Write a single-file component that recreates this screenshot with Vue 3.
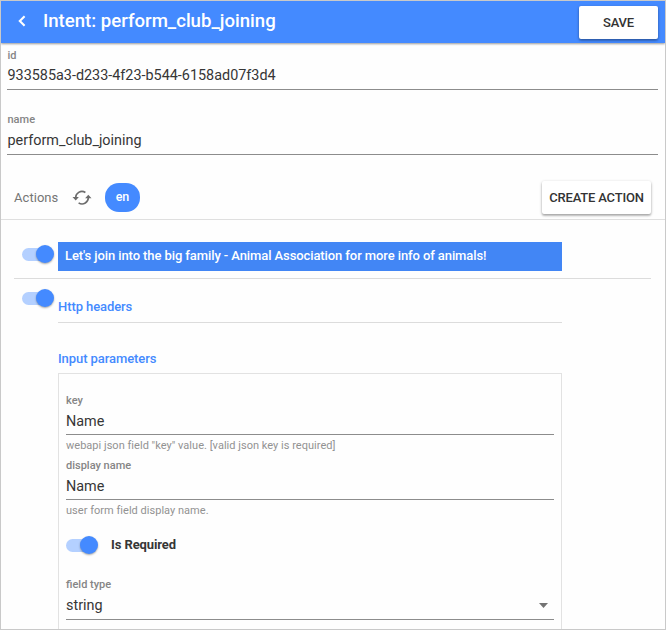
<script setup>
import { ref } from 'vue'

const identity = [
  { label: 'id', value: '933585a3-d233-4f23-b544-6158ad07f3d4' },
  { label: 'name', value: 'perform_club_joining' },
]
const parameters = [
  { label: 'key', value: 'Name', hint: 'webapi json field "key" value. [valid json key is required]' },
  { label: 'display name', value: 'Name', hint: 'user form field display name.' },
]
const message = ref("Let's join into the big family - Animal Association for more info of animals!")
</script>

<template>
  <main class="page">
    <header class="topbar">
      <svg class="back" width="10" height="14" viewBox="0 0 10 14">
        <path d="M7.6 2.2 2.8 7l4.8 4.8" fill="none" stroke="#fff" stroke-width="2.1" />
      </svg>
      <h1>Intent: perform_club_joining</h1>
      <button class="btn save">SAVE</button>
    </header>

    <section class="identity">
      <div v-for="f in identity" :key="f.label" class="field">
        <label>{{ f.label }}</label>
        <div class="value"><span>{{ f.value }}</span></div>
      </div>
    </section>

    <section class="toolbar">
      <span class="actions">Actions</span>
      <svg class="refresh" width="20" height="16" viewBox="0 0 20 16">
        <g fill="none" stroke="#6c6c6c" stroke-width="1.6">
          <path d="M3.7 8.4A6.3 6.3 0 0 1 13.4 2.5" />
          <path d="M16.3 7A6.3 6.3 0 0 1 6.6 12.9" />
        </g>
        <path d="M.5 7.1h6.4L3.7 10.6zM13.1 8.3h6.4L16.3 4.8z" fill="#6c6c6c" />
      </svg>
      <span class="lang">en</span>
      <button class="btn create">CREATE ACTION</button>
    </section>

    <section class="action first">
      <span class="switch"><i></i></span>
      <div class="message"><span>{{ message }}</span></div>
    </section>

    <section class="action second">
      <span class="switch"><i></i></span>
      <div class="details">
        <h2 class="http">Http headers</h2>
        <h2 class="input">Input parameters</h2>
        <div class="card">
          <div v-for="f in parameters" :key="f.label" class="param">
            <div class="field">
              <label>{{ f.label }}</label>
              <div class="value"><span>{{ f.value }}</span></div>
            </div>
            <p class="hint">{{ f.hint }}</p>
          </div>
          <div class="required">
            <span class="switch"><i></i></span>
            <b>Is Required</b>
          </div>
          <div class="field">
            <label>field type</label>
            <div class="value">
              <span>string</span>
              <svg class="caret" width="9" height="5" viewBox="0 0 9 5"><path d="M0 0h9L4.5 5z" fill="#737373" /></svg>
            </div>
          </div>
        </div>
      </div>
    </section>
  </main>
</template>

<style>
body { margin: 0; background: #fff; }
</style>

<style scoped>
* { box-sizing: border-box; }
.page {
  width: 666px;
  height: 630px;
  overflow: hidden;
  border: 1px solid #c9c9c9;
  background: #fefefe;
  font-family: Roboto, "Noto Sans", sans-serif;
  color: #363636;
}
.topbar {
  height: 42px;
  display: flex;
  align-items: center;
  padding: 0 7px 0 16px;
  background: #448aff;
  box-shadow: 0 1px 2px rgba(0, 0, 0, .4);
}
.back { margin-right: 16px; margin-top: -2px; flex: none; }
h1 {
  margin: -2px 0 0;
  font-size: 18.6px;
  line-height: 24px;
  font-weight: 500;
  color: #fff;
  white-space: nowrap;
}
.btn {
  margin: 0 0 0 auto;
  padding: 0;
  border: 0;
  border-radius: 2px;
  background: #fff;
  color: #333;
  font: 500 13px/33px Roboto, sans-serif;
  letter-spacing: -.2px;
  height: 33px;
  box-shadow: 0 1px 3px rgba(0, 0, 0, .3), 0 2px 2px rgba(0, 0, 0, .15);
}
.save { width: 79px; }
.create { width: 109px; }
.identity {
  padding: 5px 7px 0 6px;
  display: flex;
  flex-direction: column;
  gap: 23px;
}
.field label {
  display: block;
  font-size: 11px;
  line-height: 14px;
  font-weight: 500;
  color: #858585;
}
.identity .field:first-child label { padding-top: 1px; margin-bottom: -1px; }
.value {
  display: flex;
  align-items: center;
  justify-content: space-between;
  height: 28px;
  padding: 4px 0 3px;
  border-bottom: 1px solid #8c8c8c;
  font-size: 14.4px;
  line-height: 20px;
}
.param .value { height: 27px; padding-bottom: 2px; }
.identity label, .identity .value span { padding-left: .5px; }
.toolbar {
  height: 65px;
  padding: 21px 14px 0 13px;
  display: flex;
  align-items: center;
  border-bottom: 1px solid #dfdfdf;
}
.actions { font-size: 13px; color: #757575; width: 58px; letter-spacing: .05px; }
.refresh { flex: none; }
.lang {
  width: 35px;
  height: 29px;
  margin-left: 13px;
  border-radius: 14px;
  background: #448aff;
  color: #fff;
  font-size: 12.5px;
  line-height: 28px;
  font-weight: 500;
  text-align: center;
}
.action { display: flex; margin: 0 14px 0 13px; }
.first { height: 59px; padding: 22px 0 0 8px; border-bottom: 1px solid #dcdcdc; }
.second { padding-left: 8px; }
.switch {
  width: 32px;
  height: 18px;
  flex: none;
  display: flex;
  align-items: center;
  justify-content: flex-end;
}
.switch::before {
  content: "";
  width: 26px;
  height: 13px;
  margin-right: -12px;
  flex: none;
  border-radius: 7px;
  background: #b4d0ff;
}
.switch i {
  width: 18px;
  height: 18px;
  flex: none;
  border-radius: 50%;
  background: #448aff;
  box-shadow: 0 1px 2px rgba(0, 0, 0, .35);
}
.first .switch { margin-top: 3px; }
.second .switch { margin-top: 10px; }
.message {
  width: 504px;
  height: 29px;
  margin-left: 4px;
  padding-left: 7px;
  background: #4286f5;
  color: #fff;
  font-size: 13px;
  letter-spacing: -.095px;
  line-height: 27px;
  font-weight: 500;
  white-space: nowrap;
}
.details { width: 504px; margin-left: 4px; }
h2 {
  margin: 0;
  font-size: 13px;
  letter-spacing: -.08px;
  line-height: 18px;
  font-weight: 500;
  color: #448aff;
}
.http { height: 44px; padding-top: 19px; border-bottom: 1px solid #dcdcdc; }
.input { height: 50px; padding-top: 27px; }
.card {
  height: 270px;
  padding: 20px 7px 0;
  border: 1px solid #e2e2e2;
  border-bottom: 0;
}
.hint {
  margin: 0;
  padding-top: 4px;
  height: 24px;
  font-size: 11px;
  letter-spacing: .025px;
  line-height: 14px;
  color: #929292;
}
.required { display: flex; align-items: center; height: 54px; padding: 0 0 12px; }
.second .required .switch { margin: 0 13px 0 0; }
.required b { font-size: 13px; letter-spacing: -.1px; line-height: 18px; font-weight: 700; }
.caret { margin: 0 6px 2px 0; }
</style>
